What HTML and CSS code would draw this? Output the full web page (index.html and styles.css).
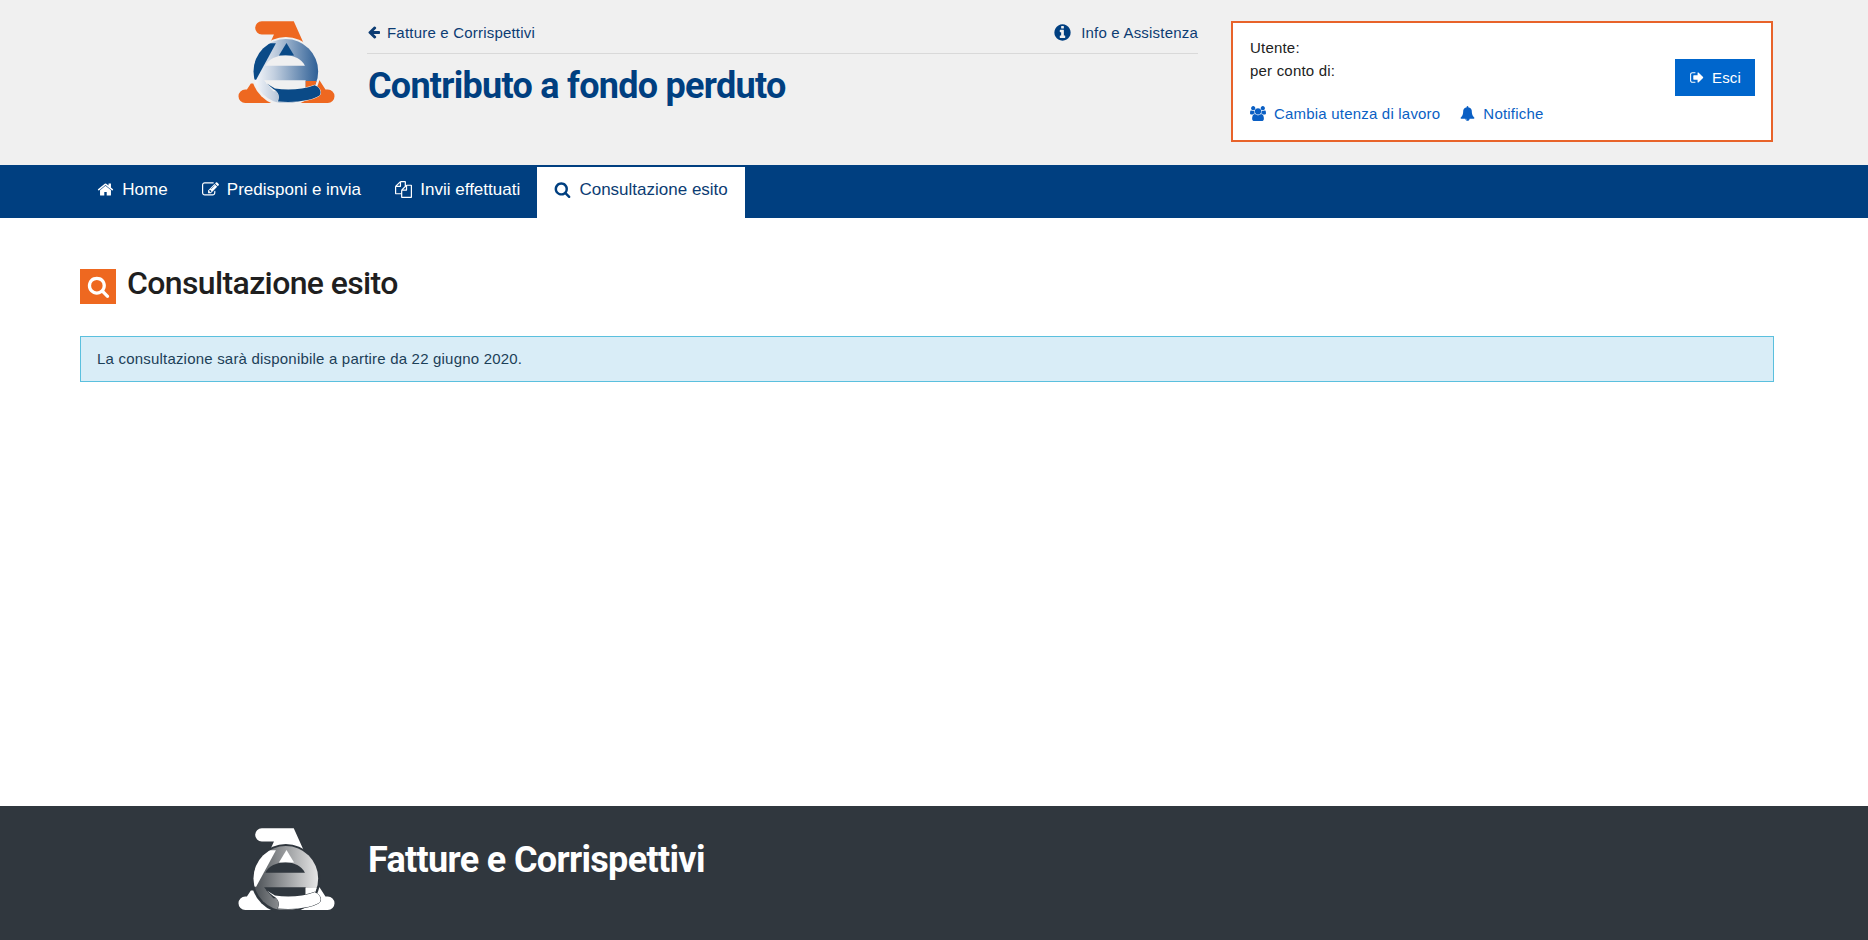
FILE: index.html
```html
<!DOCTYPE html>
<html lang="it">
<head>
<meta charset="utf-8">
<title>Contributo a fondo perduto</title>
<link rel="stylesheet" href="styles.css">
</head>
<body>
<header class="top">
  <svg class="logo" viewBox="50 25 300 260" aria-hidden="true">
    <defs>
      <linearGradient id="g1" gradientUnits="userSpaceOnUse" x1="105" y1="0" x2="295" y2="0"><stop offset="0" stop-color="#f4f6fa"/><stop offset=".3" stop-color="#c3d0e0"/><stop offset="1" stop-color="#2f6096"/></linearGradient>
      <clipPath id="c1"><circle cx="198" cy="185" r="98"/></clipPath>
    </defs>
    <path fill="#ee6820" d="M125 33H222L254 104H148L162 73H125A20 20 0 0 1 125 33ZM92 222L80 240H75A20.500 20.500 0 0 0 75 281H325A20.500 20.500 0 0 0 325 240H318L300 212H250V222Z"/>
    <circle cx="198" cy="186" r="105" fill="#f0f0f0"/>
    <g clip-path="url(#c1)">
      <rect x="90" y="80" width="220" height="200" fill="url(#g1)"/>
      <path fill="#0a4a87" d="M90 210V100H168L108 210Z"/>
      <path fill="#0a4a87" d="M200 99L223 137H177Z"/>
      <path fill="#f0f0f0" d="M136 168C145 147 170 137 197 137C224 137 245 147 256 168Z"/>
      <path fill="#f0f0f0" d="M132 212H258V245H160Z"/>
      <path fill="#ee6820" d="M258 214H300V240H258Z"/>
    </g>
    <path fill="#0a4a87" stroke="#f0f0f0" stroke-width="3" paint-order="stroke" d="M140 222L165 237C205 243 250 240 285 227C300 232 308 248 300 258C280 272 230 281 174 276C180 262 178 248 160 238Z"/>
  </svg>
  <div class="head-mid">
    <div class="crumbs">
      <a class="crumb"><svg class="ico" viewBox="0 0 1792 1792"><path d="M1664 896v128q0 53-32.500 90.500t-84.500 37.500h-704l293 294q38 36 38 90t-38 90l-75 76q-37 37-90 37-52 0-91-37l-651-652q-37-37-37-90 0-52 37-91l651-650q38-38 91-38 52 0 90 38l75 74q38 38 38 91t-38 91l-293 293h704q52 0 84.500 37.500t32.500 90.500z"/></svg>Fatture e Corrispettivi</a>
      <a class="crumb crumb-info"><svg class="ico ico-info" viewBox="0 0 1792 1792"><path d="M1152 1376v-160q0-14-9-23t-23-9h-96v-512q0-14-9-23t-23-9h-320q-14 0-23 9t-9 23v160q0 14 9 23t23 9h96v320h-96q-14 0-23 9t-9 23v160q0 14 9 23t23 9h448q14 0 23-9t9-23zm-128-896v-160q0-14-9-23t-23-9h-192q-14 0-23 9t-9 23v160q0 14 9 23t23 9h192q14 0 23-9t9-23zm640 416q0 209-103 385.500t-279.500 279.500-385.500 103-385.500-103-279.500-279.500-103-385.500 103-385.500 279.500-279.500 385.500-103 385.500 103 279.500 279.500 103 385.500z"/></svg>Info e Assistenza</a>
    </div>
    <h1 class="app-title">Contributo a fondo perduto</h1>
  </div>
  <aside class="user-box">
    <div class="user-info">
      <div class="user-lines">
        <div>Utente:</div>
        <div>per conto di:</div>
      </div>
      <div class="user-links">
        <a class="user-link"><svg class="ico ico-users" viewBox="0 0 1920 1792"><path d="M593 896q-162 5-265 128h-134q-82 0-138-40.500t-56-118.500q0-353 124-353 6 0 43.500 21t97.500 42.500 119 21.500q67 0 133-23-5 37-5 66 0 139 81 256zm1071 637q0 120-73 189.500t-194 69.500h-874q-121 0-194-69.500t-73-189.500q0-53 3.500-103.500t14-109 26.500-108.500 43-97.500 62-81 85.500-53.500 111.500-20q10 0 43 21.500t73 48 107 48 135 21.500 135-21.500 107-48 73-48 43-21.500q61 0 111.500 20t85.500 53.500 62 81 43 97.500 26.500 108.500 14 109 3.500 103.500zm-1024-1277q0 106-75 181t-181 75-181-75-75-181 75-181 181-75 181 75 75 181zm704 384q0 159-112.500 271.500t-271.500 112.500-271.500-112.500-112.500-271.500 112.500-271.500 271.500-112.500 271.500 112.500 112.500 271.500zm576 225q0 78-56 118.500t-138 40.500h-134q-103-123-265-128 81-117 81-256 0-29-5-66 66 23 133 23 59 0 119-21.500t97.500-42.500 43.500-21q124 0 124 353zm-128-609q0 106-75 181t-181 75-181-75-75-181 75-181 181-75 181 75 75 181z"/></svg>Cambia utenza di lavoro</a>
        <a class="user-link"><svg class="ico" viewBox="0 0 1792 1792"><path d="M912 1696q0-16-16-16-59 0-101.500-42.500t-42.500-101.500q0-16-16-16t-16 16q0 73 51.500 124.500t124.500 51.500q16 0 16-16zm816-288q0 52-38 90t-90 38h-448q0 106-75 181t-181 75-181-75-75-181h-448q-52 0-90-38t-38-90q50-42 91-88t85-119.500 74.500-158.500 50-206 19.500-260q0-152 117-282.500t307-158.500q-8-19-8-39 0-40 28-68t68-28 68 28 28 68q0 20-8 39 190 28 307 158.500t117 282.500q0 139 19.500 260t50 206 74.500 158.500 85 119.500 91 88z"/></svg>Notifiche</a>
      </div>
    </div>
    <a class="btn-exit"><svg class="ico" viewBox="0 0 1664 1792"><path d="M704 1440q0 4 1 20t.5 26.500-3 23.500-10 19.500-20.500 6.500h-320q-119 0-203.500-84.500t-84.500-203.500v-704q0-119 84.500-203.500t203.500-84.500h320q13 0 22.500 9.500t9.500 22.500q0 4 1 20t.5 26.500-3 23.500-10 19.500-20.500 6.500h-320q-66 0-113 47t-47 113v704q0 66 47 113t113 47h312l11.500 1 11.500 3 8 5.500 7 9 2 13.500zm928-544q0 26-19 45l-544 544q-19 19-45 19t-45-19-19-45v-288h-448q-26 0-45-19t-19-45v-384q0-26 19-45t45-19h448v-288q0-26 19-45t45-19 45 19l544 544q19 19 19 45z"/></svg>Esci</a>
  </aside>
</header>

<nav class="nav">
  <a class="nav-item"><svg class="ico" viewBox="0 0 1792 1792"><path d="M1472 992v480q0 26-19 45t-45 19h-384v-384h-256v384h-384q-26 0-45-19t-19-45v-480q0-1 .5-3t.5-3l575-474 575 474q1 2 1 6zm223-69l-62 74q-8 9-21 11h-3q-13 0-21-7l-692-577-692 577q-12 8-24 7-13-2-21-11l-62-74q-8-10-7-23.500t11-21.500l719-599q32-26 76-26t76 26l244 204v-195q0-14 9-23t23-9h192q14 0 23 9t9 23v408l219 182q10 8 11 21.500t-7 23.500z"/></svg>Home</a>
  <a class="nav-item"><svg class="ico" viewBox="0 0 1792 1792"><path d="M888 1184l116-116-152-152-116 116v56h96v96h56zm440-720q-16-16-33 1l-350 350q-17 17-1 33t33-1l350-350q17-17 1-33zm80 594v190q0 119-84.500 203.500t-203.500 84.500h-832q-119 0-203.500-84.500t-84.500-203.500v-832q0-119 84.500-203.500t203.500-84.500h832q63 0 117 25 15 7 18 23 3 17-9 29l-49 49q-14 14-32 8-23-6-45-6h-832q-66 0-113 47t-47 113v832q0 66 47 113t113 47h832q66 0 113-47t47-113v-126q0-13 9-22l64-64q15-15 35-7t20 29zm-96-738l288 288-672 672h-288v-288zm444 132l-92 92-288-288 92-92q28-28 68-28t68 28l152 152q28 28 28 68t-28 68z"/></svg>Predisponi e invia</a>
  <a class="nav-item"><svg class="ico" viewBox="0 0 1792 1792"><path d="M1696 384q40 0 68 28t28 68v1216q0 40-28 68t-68 28h-960q-40 0-68-28t-28-68v-288h-544q-40 0-68-28t-28-68v-672q0-40 20-88t48-76l408-408q28-28 76-48t88-20h416q40 0 68 28t28 68v328q68-40 128-40h416zm-544 213l-299 299h299v-299zm-640-384l-299 299h299v-299zm196 647l316-316v-416h-384v416q0 40-28 68t-68 28h-416v640h512v-256q0-40 20-88t48-76zm956 804v-1152h-384v416q0 40-28 68t-68 28h-416v640h896z"/></svg>Invii effettuati</a>
  <a class="nav-item nav-active"><svg class="ico" viewBox="0 0 1792 1792"><path d="M1216 832q0-185-131.500-316.500t-316.500-131.500-316.500 131.500-131.500 316.500 131.500 316.500 316.500 131.500 316.500-131.500 131.500-316.500zm512 832q0 52-38 90t-90 38q-54 0-90-38l-343-342q-179 124-399 124-143 0-273.500-55.500t-225-150-150-225-55.500-273.500 55.500-273.500 150-225 225-150 273.500-55.500 273.500 55.500 225 150 150 225 55.500 273.500q0 220-124 399l343 343q37 37 37 90z"/></svg>Consultazione esito</a>
</nav>

<main class="main">
  <div class="page-head">
    <span class="page-icon"><svg class="ico" viewBox="0 0 1792 1792"><path d="M1216 832q0-185-131.500-316.500t-316.500-131.500-316.500 131.500-131.500 316.500 131.500 316.500 316.500 131.500 316.500-131.500 131.500-316.500zm512 832q0 52-38 90t-90 38q-54 0-90-38l-343-342q-179 124-399 124-143 0-273.500-55.500t-225-150-150-225-55.500-273.500 55.500-273.500 150-225 225-150 273.500-55.500 273.500 55.500 225 150 150 225 55.500 273.500q0 220-124 399l343 343q37 37 37 90z"/></svg></span>
    <h2 class="page-title">Consultazione esito</h2>
  </div>
  <div class="alert">La consultazione sarà disponibile a partire da 22 giugno 2020.</div>
</main>

<footer class="foot">
  <svg class="logo" viewBox="50 25 300 260" aria-hidden="true">
    <defs>
      <linearGradient id="g2" gradientUnits="userSpaceOnUse" x1="105" y1="0" x2="295" y2="0"><stop offset="0" stop-color="#4c5156"/><stop offset=".35" stop-color="#85888b"/><stop offset="1" stop-color="#e6e6e6"/></linearGradient>
      <clipPath id="c2"><circle cx="198" cy="185" r="98"/></clipPath>
    </defs>
    <path fill="#fff" d="M125 33H222L254 104H148L162 73H125A20 20 0 0 1 125 33ZM92 222L80 240H75A20.500 20.500 0 0 0 75 281H325A20.500 20.500 0 0 0 325 240H318L300 212H250V222Z"/>
    <circle cx="198" cy="186" r="105" fill="#30373e"/>
    <g clip-path="url(#c2)">
      <rect x="90" y="80" width="220" height="200" fill="url(#g2)"/>
      <path fill="#fff" d="M90 210V100H168L108 210Z"/>
      <path fill="#fff" d="M200 99L223 137H177Z"/>
      <path fill="#30373e" d="M136 168C145 147 170 137 197 137C224 137 245 147 256 168Z"/>
      <path fill="#30373e" d="M132 212H258V245H160Z"/>
      <path fill="#fff" d="M258 214H300V240H258Z"/>
    </g>
    <path fill="#fff" stroke="#30373e" stroke-width="3" paint-order="stroke" d="M140 222L165 237C205 243 250 240 285 227C300 232 308 248 300 258C280 272 230 281 174 276C180 262 178 248 160 238Z"/>
  </svg>
  <div class="foot-title">Fatture e Corrispettivi</div>
</footer>
</body>
</html>
```

FILE: styles.css
```css
* { box-sizing: border-box; }
html, body { margin: 0; height: 100%; }
body {
  display: flex;
  flex-direction: column;
  min-height: 940px;
  font-family: "Liberation Sans", Arial, sans-serif;
  font-size: 15px;
  letter-spacing: 0.2px;
  color: #222;
  background: #fff;
  overflow: hidden;
}
.ico { width: 1em; height: 1em; fill: currentColor; flex: none; display: block; }

.top {
  height: 165px;
  flex: none;
  background: #f0f0f0;
  display: flex;
  align-items: flex-start;
  padding: 18px 95px 0 237px;
}
.logo { width: 99px; height: 87px; flex: none; display: block; }
.head-mid { width: 831px; margin-left: 31px; }
.crumbs {
  height: 37px;
  display: flex;
  justify-content: space-between;
  align-items: center;
  border-bottom: 1px solid #d9d9d9;
  padding-bottom: 6px;
  margin-top: -1px;
}
.crumb { display: flex; align-items: center; color: #0c3c73; gap: 6px; }
.crumb .ico { width: 14px; height: 14px; }
.crumb .ico-info { width: 19px; height: 19px; color: #003f80; margin-right: 3px; }
.app-title {
  margin: 9px 0 0 1px;
  font-family: Roboto, sans-serif;
  font-weight: 700;
  font-size: 36px;
  letter-spacing: -0.73px;
  line-height: 46px;
  color: #003f80;
}
.user-box {
  width: 542px;
  height: 121px;
  margin-left: 33px;
  margin-top: 3px;
  border: 2px solid #e8632a;
  background: #fff;
  display: flex;
  justify-content: space-between;
  align-items: flex-start;
  padding: 13px 16px 0 17px;
}
.user-lines { line-height: 23px; color: #222; }
.user-links { display: flex; gap: 20px; margin-top: 23px; }
.user-link { display: flex; align-items: center; gap: 8px; color: #0a5fc4; }
.user-link .ico { width: 15px; height: 15px; }
.user-link .ico-users { width: 16px; }
.btn-exit {
  margin-top: 23px;
  width: 80px;
  height: 37px;
  background: #0066cc;
  color: #fff;
  font-size: 15px;
  display: flex;
  align-items: center;
  justify-content: center;
  gap: 8px;
}
.btn-exit .ico { width: 15px; height: 15px; }

.nav {
  height: 53px;
  flex: none;
  background: #003f80;
  display: flex;
  align-items: flex-end;
  padding-left: 80px;
}
.nav-item {
  height: 51px;
  display: flex;
  align-items: center;
  padding: 0 17px 6px;
  gap: 8.25px;
  font-size: 17px;
  letter-spacing: 0;
  color: #fff;
}
.nav-item .ico { width: 17px; height: 17px; }
.nav-active { background: #fff; color: #0c3c73; }
.nav-active .ico { color: #003f80; }

.main { flex: 1; padding: 50px 94px 0 80px; }
.page-head { display: flex; align-items: center; height: 37px; gap: 11px; }
.page-icon {
  width: 36px;
  height: 35px;
  background: #ee6820;
  color: #fff;
  display: flex;
  align-items: center;
  justify-content: center;
}
.page-icon .ico { width: 23px; height: 23px; }
.page-title {
  margin: -7px 0 0;
  font-family: Roboto, sans-serif;
  font-weight: 500;
  font-size: 32px;
  letter-spacing: -0.63px;
  color: #1f1f1f;
}
.alert {
  margin-top: 31px;
  height: 46px;
  border: 1px solid #5bc0de;
  background: #d9edf7;
  color: #1c4058;
  padding: 0 16px 2px;
  display: flex;
  align-items: center;
}

.foot {
  height: 134px;
  flex: none;
  background: #30373e;
  display: flex;
  align-items: flex-start;
  padding: 19px 0 0 237px;
}
.foot-title {
  margin: 12px 0 0 32px;
  font-family: Roboto, sans-serif;
  font-weight: 700;
  font-size: 36px;
  letter-spacing: -0.67px;
  line-height: 46px;
  color: #fff;
}
```
